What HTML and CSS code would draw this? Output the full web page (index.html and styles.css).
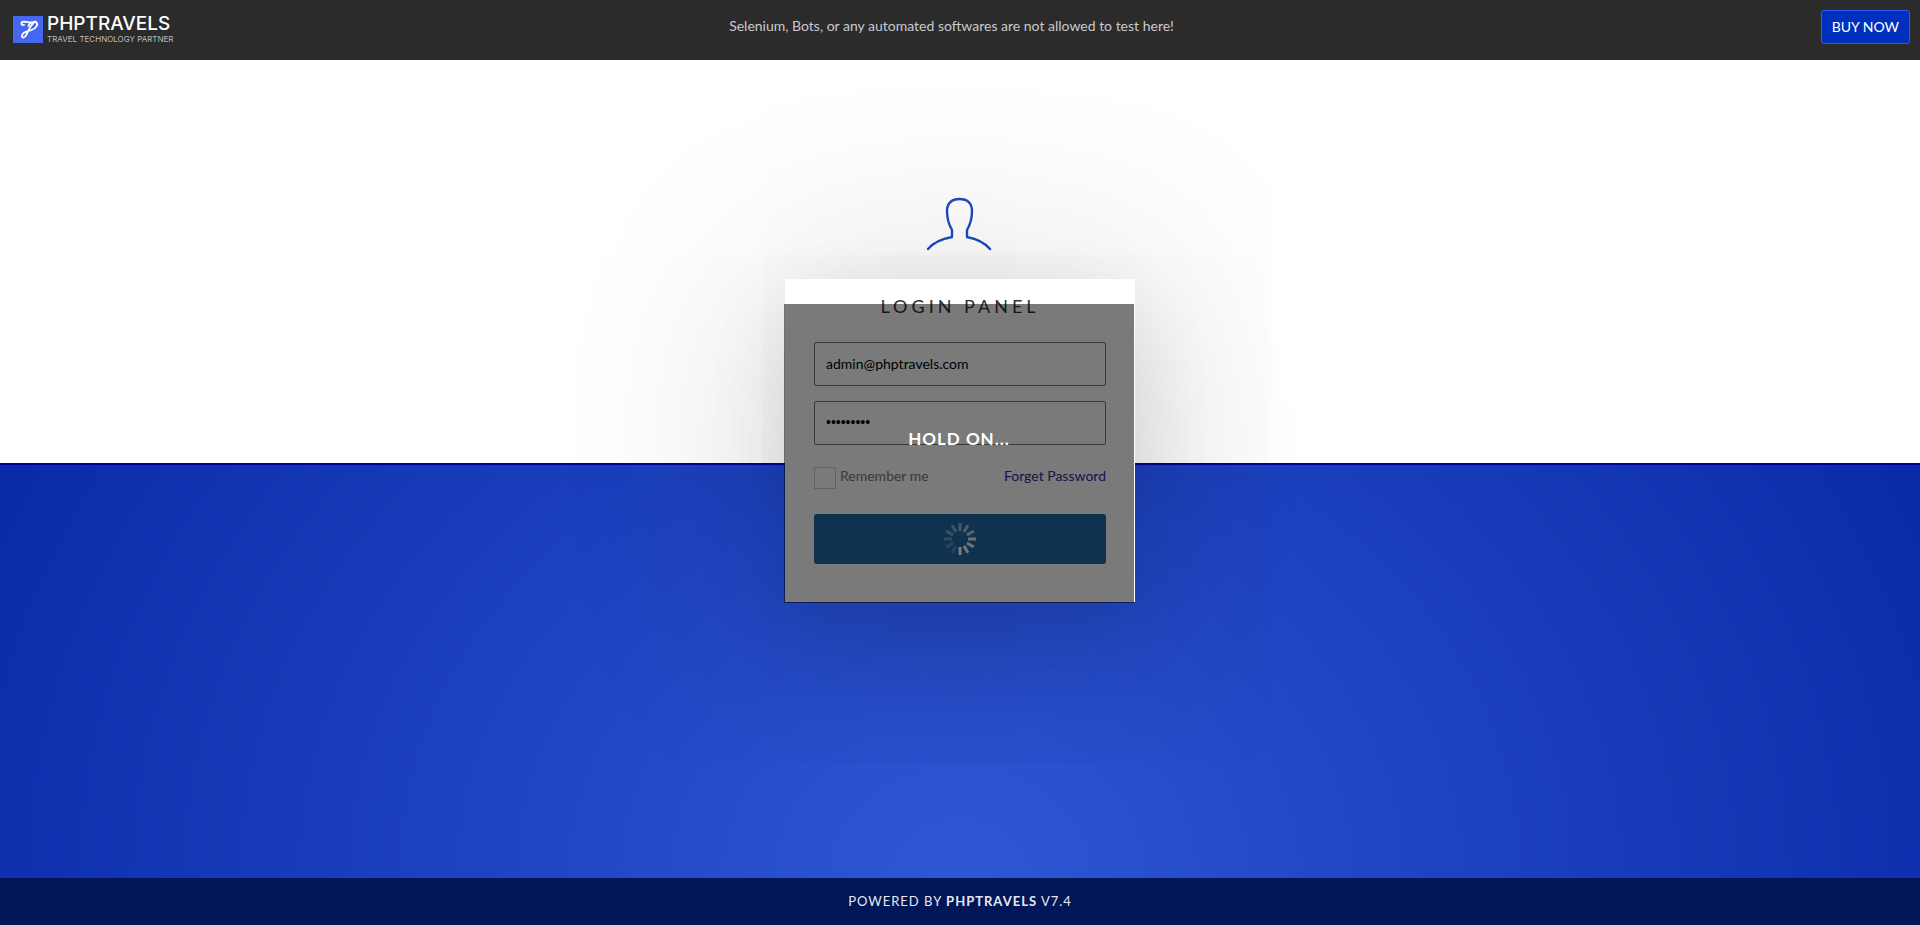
FILE: index.html
```html
<!DOCTYPE html>
<html lang="en">
<head>
<meta charset="utf-8">
<title>Administrator Login</title>
<link rel="stylesheet" href="styles.css">
</head>
<body>
<header class="topbar">
  <a class="brand" href="#">
    <svg class="brand-mark" viewBox="0 0 30 27" aria-hidden="true">
      <rect width="30" height="27" fill="#4668f0"/>
      <path d="M11 9C7.500 9 7.500 5.800 11 5.700C15 5.700 19 7.500 22.500 5.500M21 6.500C18 9 15.500 14 13.500 18.500C12 22.500 8.500 22.500 9 19.500C9.500 16 14.500 15.500 18.500 14C24 12 25.500 7.500 23 6.200C20.500 5 16 7 15.500 10" fill="none" stroke="#fff" stroke-width="1.800" stroke-linecap="round"/>
    </svg>
    <span class="brand-text">
      <span class="brand-name">PHPTRAVELS</span>
      <span class="brand-tag">TRAVEL TECHNOLOGY PARTNER</span>
    </span>
  </a>
  <p class="notice">Selenium, Bots, or any automated softwares are not allowed to test here!</p>
  <a class="buy" href="#">BUY NOW</a>
</header>
<main class="stage">
  <svg class="avatar" viewBox="0 0 66 54" aria-hidden="true">
    <path d="M1 52C6 46 14 42 25 40V33C22 28 20 21 20 14C20 6 25 2 32.500 2C40 2 45 6 45 14C45 21 43 28 40 33V40C50 42 58 46 63 52" fill="none" stroke="#1d49c4" stroke-width="2.400" stroke-linecap="round" stroke-linejoin="round"/>
  </svg>
  <form class="panel">
    <h1 class="title">LOGIN PANEL</h1>
    <input class="field" type="email" value="admin@phptravels.com" aria-label="Email">
    <input class="field field-password" type="password" value="demoadmin" aria-label="Password">
    <div class="options">
      <label class="remember"><input class="check" type="checkbox">Remember me</label>
      <a class="forget" href="#">Forget Password</a>
    </div>
    <button class="submit" type="button" aria-label="Login">
      <svg class="spinner" viewBox="-16 -16 32 32" aria-hidden="true">
        <g stroke="#fff" stroke-width="3">
          <path d="M0-8V-16" opacity=".5"/>
          <path d="M0-8V-16" opacity=".6" transform="rotate(30)"/>
          <path d="M0-8V-16" opacity=".7" transform="rotate(60)"/>
          <path d="M0-8V-16" opacity=".85" transform="rotate(90)"/>
          <path d="M0-8V-16" opacity=".9" transform="rotate(120)"/>
          <path d="M0-8V-16" opacity=".95" transform="rotate(150)"/>
          <path d="M0-8V-16" transform="rotate(180)"/>
          <path d="M0-8V-16" opacity=".2" transform="rotate(210)"/>
          <path d="M0-8V-16" opacity=".25" transform="rotate(240)"/>
          <path d="M0-8V-16" opacity=".35" transform="rotate(270)"/>
          <path d="M0-8V-16" opacity=".4" transform="rotate(300)"/>
          <path d="M0-8V-16" opacity=".45" transform="rotate(330)"/>
        </g>
      </svg>
    </button>
    <div class="overlay" role="status">HOLD ON...</div>
  </form>
</main>
<footer class="footer">POWERED BY <strong>PHPTRAVELS</strong> V7.4</footer>
</body>
</html>
```
FILE: styles.css
```css
* { box-sizing: border-box; }

body {
  margin: 0;
  min-height: 100vh;
  display: flex;
  flex-direction: column;
  background: #fff;
  font-family: "Lato", "Liberation Sans", sans-serif;
  font-size: 14px;
  line-height: 20px;
  color: #000;
}

a { text-decoration: none; }

.topbar {
  position: relative;
  z-index: 1;
  display: grid;
  grid-template-columns: 1fr auto 1fr;
  align-items: start;
  height: 60px;
  padding: 10px 10px 0 13px;
  background: #2b2b2b;
}

.brand {
  display: flex;
  gap: 4px;
  padding-top: 6px;
  color: #fff;
}

.brand-mark { width: 30px; height: 27px; }

.brand-text { display: flex; flex-direction: column; }

.brand-name {
  font: 500 19px/16px "Inter", sans-serif;
}

.brand-tag {
  font: 8px/14px "Inter", sans-serif;
  color: #bbb;
}

.notice {
  margin: 0;
  padding: 6px 20px 0 0;
  color: #c9c9cd;
}

.buy {
  justify-self: end;
  height: 34px;
  padding: 6px 10px;
  border: 1px solid #285cf7;
  border-radius: 3px;
  background: #002fbe;
  color: #fff;
}

.stage {
  flex: 1;
  display: flex;
  flex-direction: column;
  align-items: center;
  padding: 137px 16px 32px;
  background:
    linear-gradient(#00009b, #00009b) 0 403px / 100% 2px no-repeat,
    linear-gradient(#fff, #fff) 0 0 / 100% 403px no-repeat,
    radial-gradient(ellipse at bottom, #2f57d5, #001f9c);
}

.avatar { width: 66px; height: 54px; margin-bottom: 28px; }

.panel {
  position: relative;
  width: 100%;
  max-width: 350px;
  display: flex;
  flex-direction: column;
  padding: 15px 29px 38px;
  background: #fff;
  box-shadow:
    0 20px 200px 20px rgba(0, 0, 0, .17),
    0 30px 80px rgba(0, 0, 0, .08);
}

.title {
  margin: 0 0 24px;
  font-size: 18px;
  line-height: 24px;
  font-weight: 400;
  letter-spacing: 4px;
  text-align: center;
  color: #333;
}

.field {
  width: 100%;
  height: 44px;
  margin-bottom: 15px;
  padding: 0 11px 2px;
  border: 1px solid #777;
  border-radius: 2px;
  background: #fff;
  font: inherit;
  color: #000;
}

.field-password { font-family: "Liberation Sans", sans-serif; }

.options {
  display: flex;
  justify-content: space-between;
  margin: 6px 0 25px;
}

.remember {
  display: flex;
  gap: 4px;
  color: #777;
}

.check {
  appearance: none;
  width: 22px;
  height: 22px;
  margin: 1px 0 0;
  border: 1px solid #ccc;
}

.forget { color: #2c2c9c; }

.submit {
  display: flex;
  align-items: center;
  justify-content: center;
  height: 50px;
  padding: 0;
  border: 0;
  border-radius: 3px;
  background: #226aaa;
}

.spinner { width: 32px; height: 32px; }

.overlay {
  position: absolute;
  inset: 25px 1px -1px -1px;
  padding-top: 125px;
  background: rgba(0, 0, 0, .52);
  color: #fff;
  font-size: 17px;
  font-weight: 700;
  letter-spacing: 1px;
  text-align: center;
}

.footer {
  position: relative;
  padding: 13px 16px 14px;
  background: #001656;
  color: #e6e8ee;
  font-size: 13px;
  letter-spacing: 1px;
  text-align: center;
}
```
